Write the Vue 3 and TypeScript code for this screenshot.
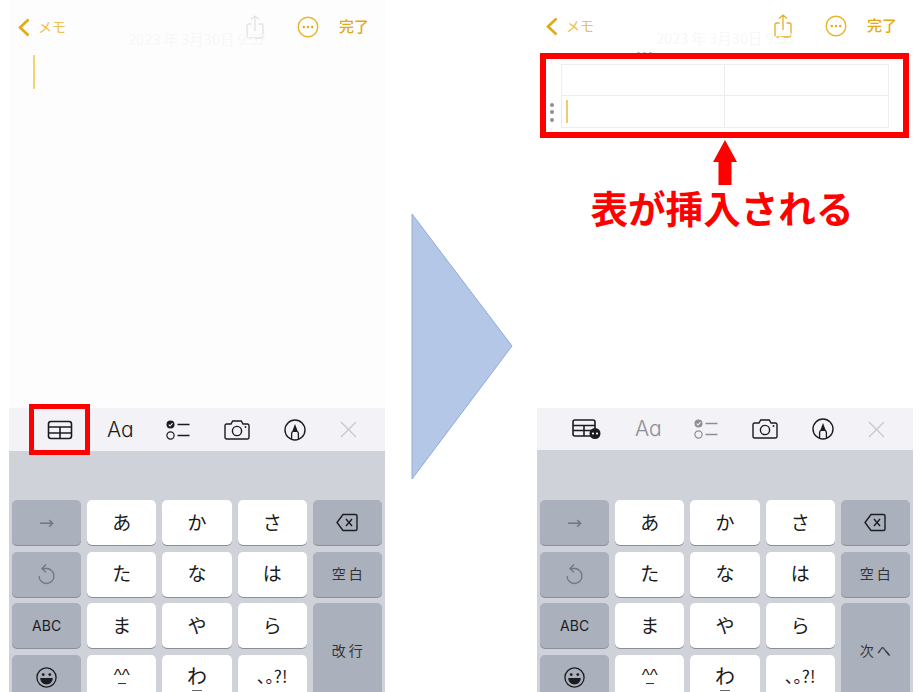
<script setup lang="ts">
interface Phone {
  id: string;
  date: string;
  returnLabel: string;
  inserted: boolean;
}

const phones: Phone[] = [
  { id: "before", date: "2023 年 3月30日 9:52", returnLabel: "改行", inserted: false },
  { id: "after", date: "2023 年 3月30日 9:53", returnLabel: "次へ", inserted: true },
];

const kanaRows = [
  ["あ", "か", "さ"],
  ["た", "な", "は"],
  ["ま", "や", "ら"],
];
</script>

<template>
  <div class="page">
    <template v-for="(phone, index) in phones" :key="phone.id">
      <section class="phone" :class="{ inserted: phone.inserted }">
        <div class="notes">
          <header class="nav">
            <svg class="chevron" width="12" height="19" viewBox="0 0 12 19">
              <path d="M10.5 1.5L2 9.5L10.5 17.5" fill="none" stroke="#e3a90f" stroke-width="2.6" />
            </svg>
            <span class="back">メモ</span>
            <svg class="share" width="18" height="24" viewBox="0 0 18 24" fill="none" stroke-width="1.3">
              <path d="M5.5 9H2.5A1.5 1.5 0 0 0 1 10.5V21.5A1.5 1.5 0 0 0 2.5 23H15.5A1.5 1.5 0 0 0 17 21.5V10.5A1.5 1.5 0 0 0 15.5 9H12.5M9 16V1M5 4.5L9 1L13 4.5" />
            </svg>
            <svg class="more" width="22" height="22" viewBox="0 0 22 22">
              <circle cx="11" cy="11" r="9.8" fill="none" stroke="#e8b52c" stroke-width="1.4" />
              <circle cx="6.8" cy="11" r="1.2" fill="#e3a90f" />
              <circle cx="11" cy="11" r="1.2" fill="#e3a90f" />
              <circle cx="15.2" cy="11" r="1.2" fill="#e3a90f" />
            </svg>
            <span class="done">完了</span>
          </header>
          <p class="date">{{ phone.date }}</p>

          <div v-if="phone.inserted" class="table">
            <i class="col-handle"></i>
            <i class="row-handle"></i>
            <div class="cell col-a row-a"></div>
            <div class="cell row-a"></div>
            <div class="cell col-a"><span class="cell-caret"></span></div>
            <div class="cell"></div>
          </div>
          <div v-else class="caret"></div>
        </div>

        <div class="toolbar">
          <svg v-if="!phone.inserted" class="tool" width="26" height="20" viewBox="0 0 26 20" fill="none" stroke="#1c1c1e" stroke-width="1.6">
            <rect x="1.5" y="1.5" width="23" height="17" rx="2.5" />
            <path d="M1.5 7H24.5M1.5 13H24.5M13 7V18.5" />
          </svg>
          <svg v-else class="tool" width="29" height="20" viewBox="0 0 29 20">
            <g fill="none" stroke="#1c1c1e" stroke-width="1.6">
              <path d="M19 17H3A2 2 0 0 1 1 15V3A2 2 0 0 1 3 1H21A2 2 0 0 1 23 3V10M1 6.5H23M1 11.5H19M12 6.5V17" />
            </g>
            <circle cx="23" cy="14.5" r="5.5" fill="#1c1c1e" />
            <circle cx="21" cy="14.5" r="1.1" fill="#fff" />
            <circle cx="25" cy="14.5" r="1.1" fill="#fff" />
          </svg>

          <span class="tool format">Aa</span>

          <svg class="tool checklist" width="24" height="20" viewBox="0 0 24 20" fill="none">
            <circle cx="4.5" cy="4.5" r="4" fill="currentColor" />
            <path d="M2.7 4.6L4.1 6L6.5 3.2" stroke="#f2f2f7" stroke-width="1.1" />
            <circle cx="4.5" cy="15.5" r="3.6" stroke="currentColor" stroke-width="1.2" />
            <path d="M11.5 4.5H23.5M11.5 15.5H23.5" stroke="currentColor" stroke-width="1.3" />
          </svg>

          <svg class="tool" width="26" height="20" viewBox="0 0 26 20" fill="none" stroke="#1c1c1e" stroke-width="1.4">
            <path d="M2.5 4H7L8.7 1H17.3L19 4H23.5A1.5 1.5 0 0 1 25 5.5V17.5A1.5 1.5 0 0 1 23.5 19H2.5A1.5 1.5 0 0 1 1 17.5V5.5A1.5 1.5 0 0 1 2.5 4Z" />
            <circle cx="13" cy="11" r="4.6" />
            <circle cx="21.5" cy="7" r="0.9" fill="#1c1c1e" stroke="none" />
          </svg>

          <svg class="tool" width="22" height="22" viewBox="0 0 22 22" fill="none">
            <circle cx="11" cy="11" r="10" stroke="#1c1c1e" stroke-width="1.4" />
            <path d="M11 5L8 13H14Z" fill="#1c1c1e" />
            <path d="M7.6 20.5V14.5L8.4 12.5M14.4 20.5V14.5L13.6 12.5" stroke="#1c1c1e" stroke-width="1.3" />
          </svg>

          <svg class="tool" width="17" height="17" viewBox="0 0 17 17">
            <path d="M1 1L16 16M16 1L1 16" stroke="#c7c7cc" stroke-width="1.3" />
          </svg>
        </div>

        <div class="keyboard">
          <div class="key fn arrow-key">→</div>
          <div v-for="kana in kanaRows[0]" :key="kana" class="key kana">{{ kana }}</div>
          <div class="key fn">
            <svg width="22" height="19" viewBox="0 0 22 19" fill="none" stroke="#1c1c1e" stroke-width="1.4">
              <path d="M7 1.5H19.5A1.5 1.5 0 0 1 21 3V16A1.5 1.5 0 0 1 19.5 17.5H7L1 9.5Z" />
              <path d="M10 6L16 13M16 6L10 13" />
            </svg>
          </div>

          <div class="key fn">
            <svg width="19" height="22" viewBox="0 0 19 22" fill="none" stroke="#73777f" stroke-width="1.3">
              <path d="M5 5.5H9.5A7.5 7.5 0 1 1 2 13M9 1.5L5 5.5L9 9.5" />
            </svg>
          </div>
          <div v-for="kana in kanaRows[1]" :key="kana" class="key kana">{{ kana }}</div>
          <div class="key fn word">空白</div>

          <div class="key fn abc">ABC</div>
          <div v-for="kana in kanaRows[2]" :key="kana" class="key kana">{{ kana }}</div>
          <div class="key fn word return">{{ phone.returnLabel }}</div>

          <div class="key fn">
            <svg width="21" height="21" viewBox="0 0 21 21">
              <circle cx="10.5" cy="10.5" r="9.6" fill="none" stroke="#1c1c1e" stroke-width="1.3" />
              <circle cx="7.2" cy="7.6" r="1.4" fill="#1c1c1e" />
              <circle cx="13.8" cy="7.6" r="1.4" fill="#1c1c1e" />
              <path d="M4.2 11H16.8C16.6 15 14 17.4 10.5 17.4C7 17.4 4.4 15 4.2 11Z" fill="#1c1c1e" />
            </svg>
          </div>
          <div class="key kana small-mark"><span>^^</span></div>
          <div class="key kana wa">わ</div>
          <div class="key kana punct">、。?!</div>
        </div>

        <div class="highlight" :class="phone.inserted ? 'highlight-table' : 'highlight-tool'"></div>
        <div v-if="phone.inserted" class="callout">
          <svg width="24" height="45" viewBox="0 0 24 45">
            <path d="M12 0L24 22H18.5V45H5.5V22H0Z" fill="#ff0000" />
          </svg>
          <strong>表が挿入される</strong>
        </div>
      </section>

      <div v-if="index === 0" class="divider">
        <svg width="102" height="268" viewBox="0 0 102 268">
          <path d="M1 1L101 133L1 266Z" fill="#b4c7e7" stroke="#8faadc" stroke-width="1" />
        </svg>
      </div>
    </template>
  </div>
</template>

<style>
html,
body {
  margin: 0;
  background: #fff;
}
</style>

<style scoped>
.page {
  display: flex;
  width: 923px;
  height: 692px;
  overflow: hidden;
  padding-left: 9px;
  box-sizing: border-box;
  font-family: "Noto Sans CJK JP", "Liberation Sans", sans-serif;
  background: #fff;
}

.phone {
  position: relative;
  flex: none;
  display: flex;
  flex-direction: column;
  width: 376px;
  height: 692px;
  overflow: hidden;
}

.divider {
  flex: none;
  width: 152px;
  padding: 213px 0 0 26px;
  box-sizing: border-box;
}

.divider svg {
  display: block;
}

/* note area */
.notes {
  flex: none;
  height: 408px;
  background: #fdfdfd;
}

.inserted .notes {
  background: #fff;
}

.nav {
  display: flex;
  align-items: center;
  height: 24px;
  padding: 15px 0 0 9px;
  color: #e3a90f;
}

.inserted .nav {
  padding-top: 14px;
}

.chevron {
  flex: none;
}

.back {
  margin: -3px 0 0 8px;
  font-size: 14px;
  line-height: 20px;
  color: #ecc052;
}

.share {
  margin-left: 180px;
  stroke: #e2e2e2;
}

.inserted .share {
  stroke: #e3ae20;
}

.more {
  margin-left: 33px;
}

.done {
  margin: -3px 0 0 20px;
  font-size: 15px;
  line-height: 20px;
  font-weight: 500;
  color: #e3a90f;
}

.date {
  margin: -7px 0 0;
  height: 14px;
  font-size: 14.5px;
  line-height: 14px;
  text-align: center;
  color: #f7f7f7;
}

.caret {
  width: 2px;
  height: 34px;
  margin: 9px 0 0 24px;
  background: #f5d272;
}

.table {
  position: relative;
  display: grid;
  grid-template-columns: 1fr 1fr;
  grid-template-rows: 1fr 1fr;
  width: 328px;
  height: 64px;
  margin: 19px 0 0 24px;
  border: 1px solid #eeeeee;
  box-sizing: border-box;
}

.col-a {
  border-right: 1px solid #ececec;
}

.row-a {
  border-bottom: 1px solid #ececec;
}

.cell-caret {
  display: block;
  width: 1.5px;
  height: 23px;
  margin: 4px 0 0 4px;
  background: #eecb70;
}

.row-handle {
  position: absolute;
  left: -12px;
  top: 38px;
  width: 4px;
  height: 4px;
  border-radius: 50%;
  background: #8e8e93;
  box-shadow: 0 7px 0 #8e8e93, 0 15px 0 #8e8e93;
}

.col-handle {
  position: absolute;
  left: 75px;
  top: -13px;
  width: 3px;
  height: 3px;
  border-radius: 50%;
  background: #9a9a9f;
  box-shadow: 6px 0 0 #9a9a9f, 12px 0 0 #9a9a9f;
}

/* format bar */
.toolbar {
  flex: none;
  display: flex;
  align-items: center;
  gap: 34px;
  height: 43px;
  padding-left: 38px;
  box-sizing: border-box;
  background: #f2f2f7;
}

.inserted .toolbar {
  padding-left: 35px;
  height: 42px;
}

.tool {
  flex: none;
  display: block;
}

.format {
  width: 25px;
  font-family: "Inter", "Liberation Sans", sans-serif;
  font-feature-settings: "cv11";
  font-size: 21px;
  font-weight: 300;
  line-height: 24px;
  color: #1c1c1e;
}

.checklist {
  color: #1c1c1e;
}

.inserted .format,
.inserted .checklist {
  color: #8e8e93;
}

/* keyboard */
.keyboard {
  flex: 1;
  display: grid;
  grid-template-columns: repeat(5, 69.2px);
  grid-auto-rows: 45px;
  gap: 6.5px 6px;
  padding: 49px 0 0 3px;
  box-sizing: border-box;
  background: #cfd2d9;
}

.inserted .keyboard {
  padding-top: 50px;
}

.key {
  display: flex;
  align-items: center;
  justify-content: center;
  border-radius: 5px;
  box-shadow: 0 1px 0 #8b8e95;
  color: #1a1a1a;
}

.kana {
  padding-bottom: 3px;
  box-sizing: border-box;
  background: #fff;
  font-size: 19px;
}

.fn {
  background: #aab0bc;
}

.arrow-key {
  font-family: "DejaVu Sans", sans-serif;
  font-size: 18px;
  color: #73777f;
}

.word {
  padding: 0 0 3px 3px;
  box-sizing: border-box;
  font-size: 14px;
  letter-spacing: 3px;
  color: #333;
}

.abc {
  font-family: "Inter", "Liberation Sans", sans-serif;
  font-size: 14px;
  color: #1c1c1e;
}

.return {
  grid-row: span 2;
}

.small-mark {
  position: relative;
  font-family: "Liberation Sans", sans-serif;
  font-size: 17px;
}

.small-mark::after {
  content: "";
  position: absolute;
  left: 31px;
  top: 28px;
  width: 8px;
  height: 1.5px;
  background: #333;
}

.wa {
  position: relative;
  font-size: 20px;
}

.wa::after {
  content: "";
  position: absolute;
  left: 30px;
  top: 35px;
  width: 10px;
  height: 1.5px;
  background: #666;
}

.punct {
  font-size: 17px;
  font-feature-settings: "palt";
}

/* annotations */
.highlight {
  position: absolute;
  box-sizing: border-box;
  border-style: solid;
  border-color: #ff0000;
}

.highlight-tool {
  left: 20px;
  top: 404px;
  width: 61px;
  height: 51px;
  border-width: 5px;
}

.highlight-table {
  left: 3px;
  top: 53px;
  width: 369px;
  height: 85px;
  border-width: 6px;
}

.callout {
  position: absolute;
  left: 0;
  right: 0;
  top: 140px;
  display: flex;
  flex-direction: column;
  align-items: center;
  color: #ff0000;
}

.callout svg {
  display: block;
}

.callout strong {
  margin: -1px 6px 0 0;
  font-size: 37.6px;
  line-height: 46px;
  font-weight: 700;
  white-space: nowrap;
}
</style>
